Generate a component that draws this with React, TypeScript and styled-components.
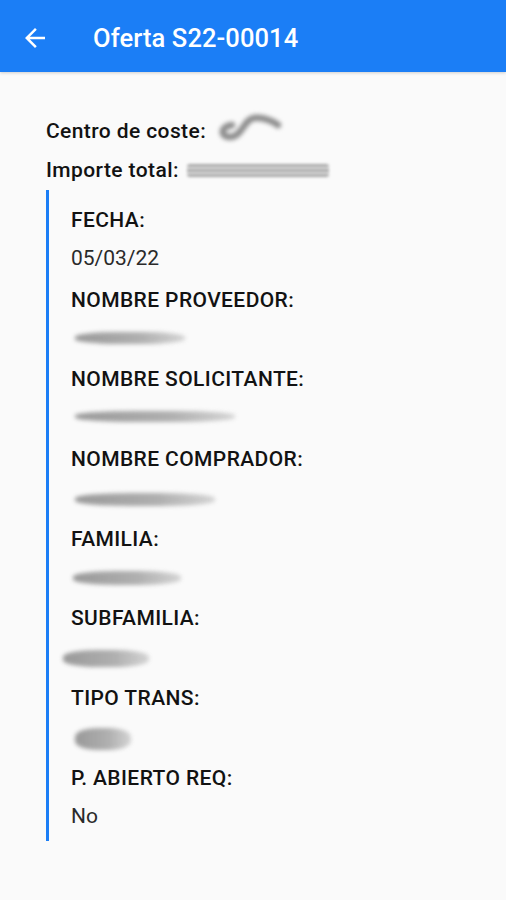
import React from 'react';
import styled, { createGlobalStyle } from 'styled-components';

const GlobalStyle = createGlobalStyle`
  html, body {
    margin: 0;
    padding: 0;
    background: #fafafa;
  }
  body {
    font-family: Roboto, "Noto Sans", "Liberation Sans", sans-serif;
    -webkit-font-smoothing: antialiased;
  }
`;

const Page = styled.div`
  width: 506px;
  min-height: 900px;
  background: #fafafa;
`;

const AppBar = styled.header`
  height: 72px;
  box-sizing: border-box;
  padding: 4px 0 0 20px;
  background: #1b7ef6;
  display: flex;
  align-items: center;
  gap: 43px;
  box-shadow: 0 1px 3px rgba(0, 0, 0, 0.18);
  position: relative;
`;

const BackButton = styled.button`
  width: 30px;
  height: 30px;
  padding: 0;
  border: none;
  background: transparent;
  color: #ffffff;
  display: flex;
  align-items: center;
  justify-content: center;
`;

const Title = styled.h1`
  margin: 0;
  font-size: 25.5px;
  font-weight: 500;
  color: #ffffff;
  letter-spacing: 0.1px;
`;

const Content = styled.main`
  padding: 47px 0 0 46px;
`;

const SummaryRow = styled.div`
  display: flex;
  align-items: center;
  gap: 8px;
  height: 24px;
  margin-bottom: 15px;
  font-size: 21px;
  font-weight: 500;
  letter-spacing: 0.4px;
  color: #121212;
`;

const DetailBlock = styled.section`
  margin-top: -7px;
  border-left: 3px solid #1b7ef6;
  padding: 18px 0 13px 22px;
  display: flex;
  flex-direction: column;
  gap: 17.7px;
  width: 400px;
`;

const Field = styled.div`
  display: flex;
  flex-direction: column;
  gap: 14px;
`;

const Label = styled.div`
  font-size: 21px;
  font-weight: 500;
  letter-spacing: 0.4px;
  line-height: 24px;
  color: #121212;
`;

const Value = styled.div`
  font-size: 21px;
  font-weight: 400;
  line-height: 24px;
  height: 24px;
  color: #2a2a2a;
  display: flex;
  align-items: center;
`;

type SmudgeProps = {
  $w: number;
  $h: number;
  $offset?: number;
  $shift?: number;
};

const Smudge = styled.span<SmudgeProps>`
  display: inline-block;
  width: ${(p) => p.$w}px;
  height: ${(p) => p.$h}px;
  margin-left: ${(p) => p.$offset || 0}px;
  transform: translateY(${(p) => p.$shift || 0}px);
  border-radius: 40%;
  background: linear-gradient(90deg, #8f8f8f, #a8a8a8 60%, #d0d0d0);
  filter: blur(2.2px);
  opacity: 0.9;
`;

const StripedSmudge = styled.span<SmudgeProps>`
  display: inline-block;
  width: ${(p) => p.$w}px;
  height: ${(p) => p.$h}px;
  margin-left: ${(p) => p.$offset || 0}px;
  background: repeating-linear-gradient(
    180deg,
    #999999 0px,
    #999999 3px,
    #e2e2e2 3px,
    #e2e2e2 5px
  );
  filter: blur(1.4px);
  opacity: 0.85;
  border-radius: 3px;
`;

const ArrowBack = () => (
  <svg width="30" height="30" viewBox="0 0 24 24" fill="currentColor">
    <path d="M20 11H7.83l5.59-5.59L12 4l-8 8 8 8 1.41-1.41L7.83 13H20v-2z" />
  </svg>
);

const Squiggle = () => (
  <svg width="72" height="32" viewBox="0 0 72 32" style={{ filter: 'blur(2px)', marginTop: -8 }}>
    <path
      d="M18 14 C6 16 6 26 16 26 C28 26 30 8 40 7 C50 6 58 10 64 14"
      stroke="#8c8c8c"
      strokeWidth="6.5"
      fill="none"
      strokeLinecap="round"
    />
  </svg>
);

type Detail = {
  label: string;
  value?: string;
  smudge?: { w: number; h: number; offset?: number; shift?: number };
};

const details: Detail[] = [
  { label: 'FECHA:', value: '05/03/22' },
  { label: 'NOMBRE PROVEEDOR:', smudge: { w: 110, h: 12, offset: 4 } },
  { label: 'NOMBRE SOLICITANTE:', smudge: { w: 160, h: 11, offset: 4, shift: -1 } },
  { label: 'NOMBRE COMPRADOR:', smudge: { w: 140, h: 13, offset: 4, shift: 2 } },
  { label: 'FAMILIA:', smudge: { w: 108, h: 14, offset: 2, shift: 1 } },
  { label: 'SUBFAMILIA:', smudge: { w: 86, h: 17, offset: -8, shift: 2 } },
  { label: 'TIPO TRANS:', smudge: { w: 56, h: 22, offset: 4, shift: 3 } },
  { label: 'P. ABIERTO REQ:', value: 'No' },
];

export default function App() {
  return (
    <Page>
      <GlobalStyle />
      <AppBar>
        <BackButton aria-label="Volver">
          <ArrowBack />
        </BackButton>
        <Title>Oferta S22-00014</Title>
      </AppBar>
      <Content>
        <SummaryRow>
          Centro de coste:
          <Squiggle />
        </SummaryRow>
        <SummaryRow>
          Importe total:
          <StripedSmudge $w={142} $h={13} />
        </SummaryRow>
        <DetailBlock>
          {details.map((d) => (
            <Field key={d.label}>
              <Label>{d.label}</Label>
              <Value>
                {d.value !== undefined
                  ? d.value
                  : d.smudge && (
                      <Smudge
                        $w={d.smudge.w}
                        $h={d.smudge.h}
                        $offset={d.smudge.offset}
                        $shift={d.smudge.shift}
                      />
                    )}
              </Value>
            </Field>
          ))}
        </DetailBlock>
      </Content>
    </Page>
  );
}
